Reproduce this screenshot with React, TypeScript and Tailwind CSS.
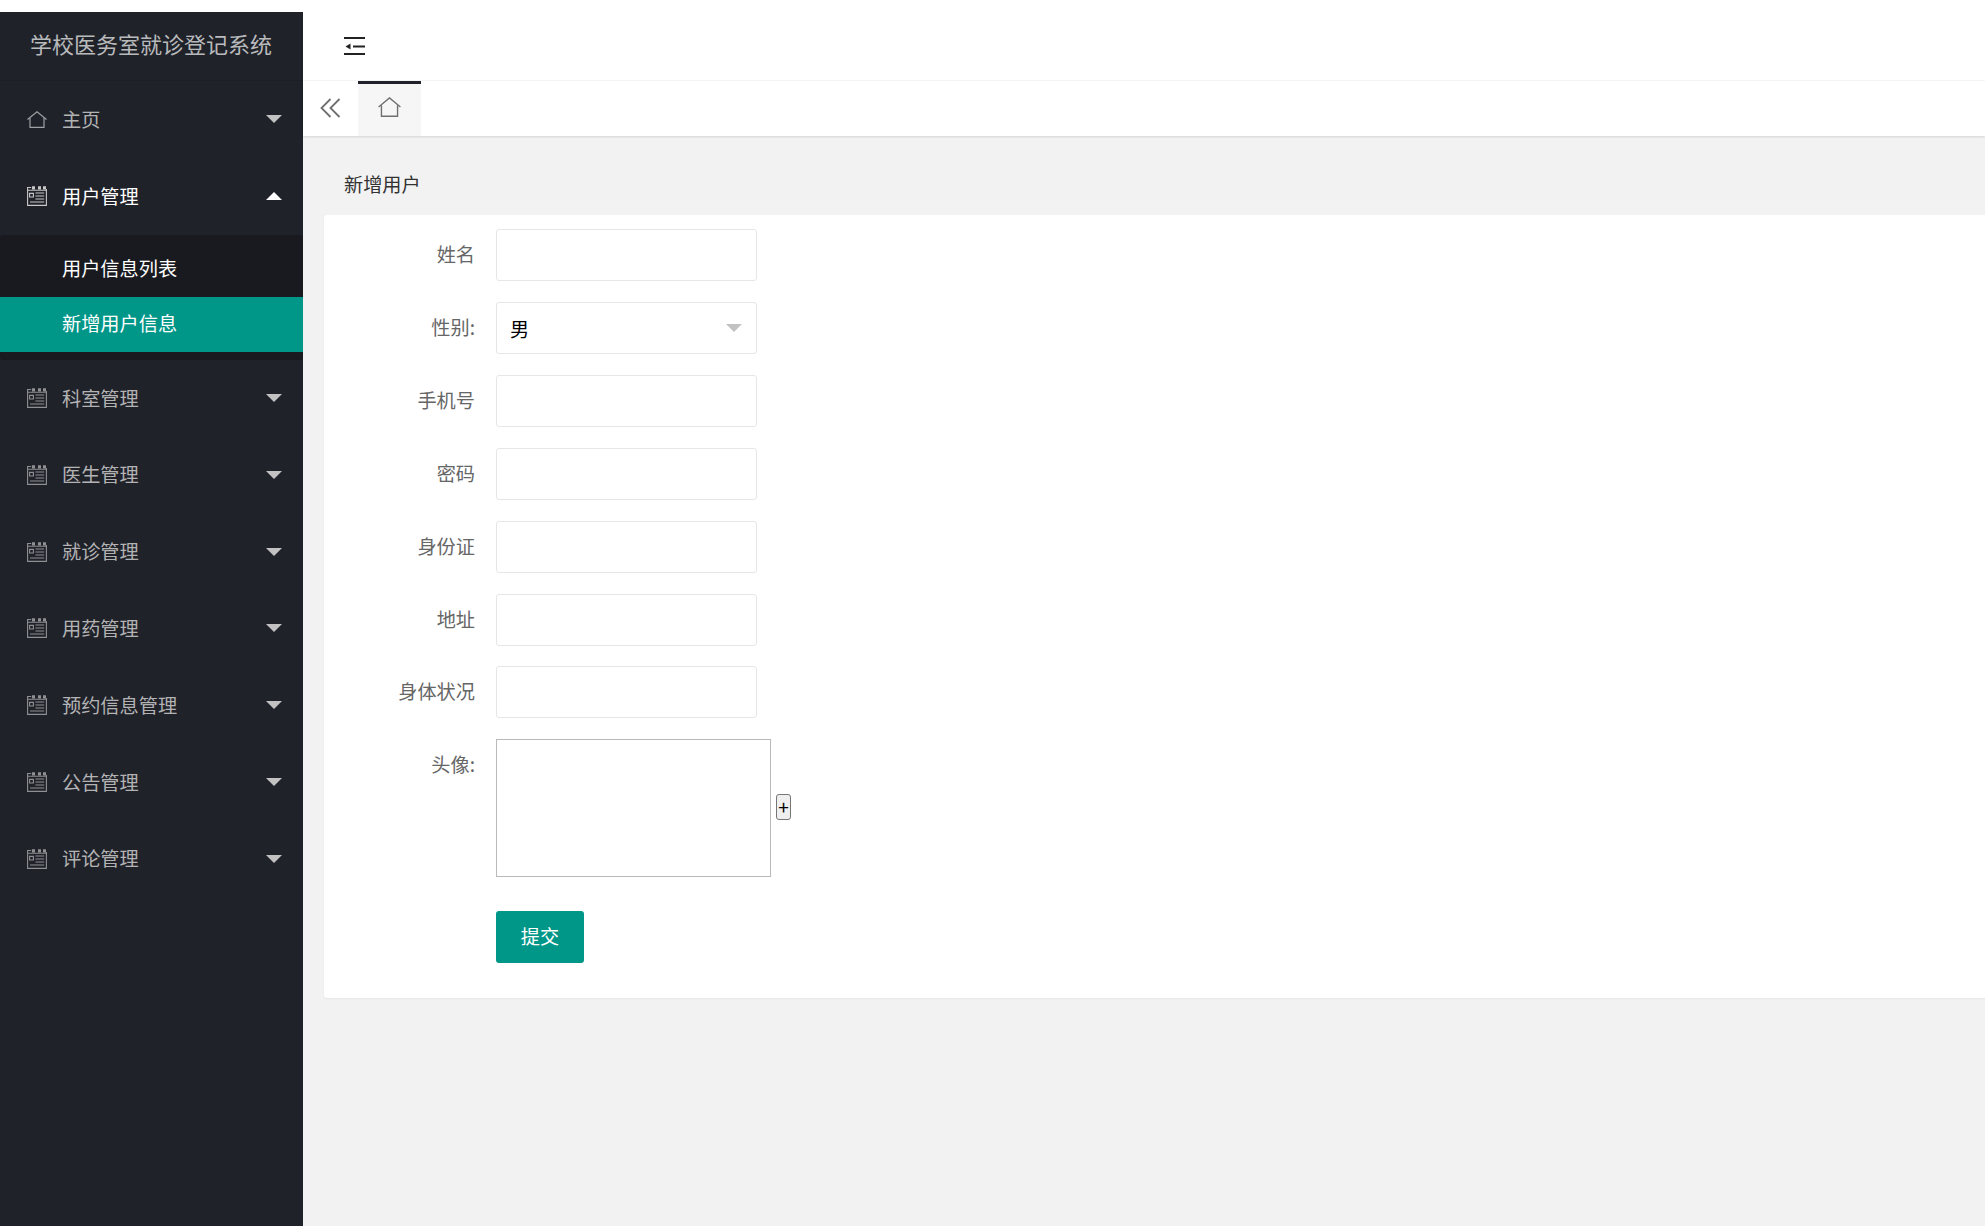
import React from "react";

const font = { fontFamily: '"Noto Sans CJK SC", "Liberation Sans", sans-serif' };

function HomeIcon({ width = 21, height = 17, color = "#9a9b9e" }: { width?: number; height?: number; color?: string }) {
  return (
    <svg width={width} height={height} viewBox="0 0 20 16" fill="none" stroke={color} strokeWidth="1.2" preserveAspectRatio="none">
      <path d="M.5 8 10 .8 19.5 8" />
      <path d="M3 6.5v8.9h14V6.5" />
    </svg>
  );
}

function ListIcon({ color = "#9a9b9e" }: { color?: string }) {
  return (
    <svg width="20" height="20" viewBox="0 0 20 20" fill="none" stroke={color} strokeWidth="1.1">
      <path d="M.6 1v18.4h18.8V3" />
      <path d="M.6 1.5h3.6M.6 4.3h18.8" />
      <path d="M5 .2h3v3.4H5zM11 .2h3v3.4h-3zM16 .2h3v3.4h-3z" fill={color} stroke="none" />
      <path d="M2.6 7.4h3.8v3.6H2.6z" />
      <path d="M8.4 7h8.8M8.4 10h8.8M8.4 13h8.8M3 16h14.2" />
    </svg>
  );
}

function Caret({ up, color }: { up?: boolean; color: string }) {
  return (
    <span
      className={
        up
          ? "w-0 h-0 border-x-[8px] border-x-transparent border-b-[8px]"
          : "w-0 h-0 border-x-[8px] border-x-transparent border-t-[8px]"
      }
      style={up ? { borderBottomColor: color } : { borderTopColor: color }}
    />
  );
}

function NavItem({ label, home, open }: { label: string; home?: boolean; open?: boolean }) {
  const color = open ? "#ffffff" : "#b3b3b4";
  return (
    <div className="h-[76.8px] flex items-center pl-[27px] pr-[21px] text-[19.2px]" style={{ color }}>
      <span className="w-[20px] mr-[15px] flex justify-center shrink-0">
        {home ? <HomeIcon color="#a0a1a3" /> : <ListIcon color={open ? "#c8c8c9" : "#8f9092"} />}
      </span>
      <span className="flex-1">{label}</span>
      <Caret up={open} color={open ? "#ffffff" : "#c2c2c2"} />
    </div>
  );
}

function Field({ label, children }: { label: string; children?: React.ReactNode }) {
  return (
    <div className="flex mb-[20.91px]">
      <label className="w-[172px] h-[52px] leading-[51px] pr-[21px] text-right text-[19.2px] text-[#666666] shrink-0">
        {label}
      </label>
      {children ?? <input className="w-[261px] h-[52px] bg-white border border-[#e6e6e6] rounded-[3px] outline-none" />}
    </div>
  );
}

const below = ["科室管理", "医生管理", "就诊管理", "用药管理", "预约信息管理", "公告管理", "评论管理"];

export default function App() {
  return (
    <div className="h-screen bg-white pt-3 flex flex-col overflow-hidden" style={font}>
      <div className="flex flex-1 min-h-0">
        <aside className="w-[303px] shrink-0 bg-[#20222a]">
          <div className="h-[69px] flex items-center pl-[30px] text-[22px] text-[#b9babc] border-b border-[#1c1e25]">
            <span className="-mt-[5px]">学校医务室就诊登记系统</span>
          </div>
          <NavItem label="主页" home />
          <NavItem label="用户管理" open />
          <div className="bg-[#191a20] pt-[7px] pb-[7px] rounded-[3px] h-[125px]">
            <div className="h-[55px] flex items-center pl-[62px] pb-[2px] text-[19.2px] text-white">用户信息列表</div>
            <div className="h-[55px] flex items-center pl-[62px] pb-[2px] text-[19.2px] text-white bg-[#009688]">新增用户信息</div>
          </div>
          {below.map((l) => (
            <NavItem key={l} label={l} />
          ))}
        </aside>
        <main className="flex-1 min-w-0 flex flex-col bg-[#f2f2f2]">
          <header className="h-[69px] bg-white border-b border-[#f6f6f6] flex items-center pl-[41px] shrink-0">
            <svg width="21" height="18" viewBox="0 0 21 18">
              <path d="M0 1h21M9 9.5h12M0 17h21" stroke="#222" strokeWidth="2" />
              <path d="M6.5 6.5v6L1.5 9.5z" fill="#222" />
            </svg>
          </header>
          <div className="h-[55px] bg-white shadow-[0_1px_2px_rgba(0,0,0,0.12)] flex shrink-0">
            <div className="w-[55px] flex items-center justify-center pb-[2px]">
              <svg width="21" height="20" viewBox="0 0 21 20" fill="none" stroke="#6f6f6f" strokeWidth="1.8">
                <path d="M10.5 1 1.5 10l9 9M19.5 1l-9 9 9 9" />
              </svg>
            </div>
            <div className="w-[63px] bg-[#f6f6f6] border-t-[3px] border-[#20222a] flex justify-center pt-[13px]">
              <HomeIcon width={23} height={20} color="#6f6f6f" />
            </div>
          </div>
          <div className="pt-[26px] pl-[41px] h-[79px] text-[19.2px] leading-[44px] text-[#333333] shrink-0">新增用户</div>
          <div className="ml-[21px] bg-white rounded-l-[3px] shadow-[0_1px_2px_rgba(0,0,0,0.05)] pt-[14px] h-[783px] shrink-0">
            <Field label="姓名" />
            <Field label="性别:">
              <div className="w-[261px] h-[52px] border border-[#e6e6e6] rounded-[3px] flex items-center pl-[13px] pr-[14px] text-[19.2px] text-black">
                <span className="flex-1 pt-[2px]">男</span>
                <Caret color="#c2c2c2" />
              </div>
            </Field>
            <Field label="手机号" />
            <Field label="密码" />
            <Field label="身份证" />
            <Field label="地址" />
            <Field label="身体状况" />
            <div className="flex items-center mb-[34px]">
              <label className="self-start w-[172px] h-[52px] leading-[51px] pr-[21px] text-right text-[19.2px] text-[#666666] shrink-0">
                头像:
              </label>
              <div className="w-[275px] h-[138px] border border-[#b9b9b9] shrink-0" />
              <button className="ml-[5px] w-[15px] h-[26px] -mt-[2px] bg-[#efefef] border border-[#767676] rounded-[3px] text-[19px] leading-[22px] text-black flex items-center justify-center">
                +
              </button>
            </div>
            <div className="pl-[172px]">
              <button className="w-[88px] h-[52px] bg-[#009688] rounded-[3px] text-white text-[19.2px] leading-[48px] pb-[3px]">提交</button>
            </div>
          </div>
        </main>
      </div>
    </div>
  );
}
